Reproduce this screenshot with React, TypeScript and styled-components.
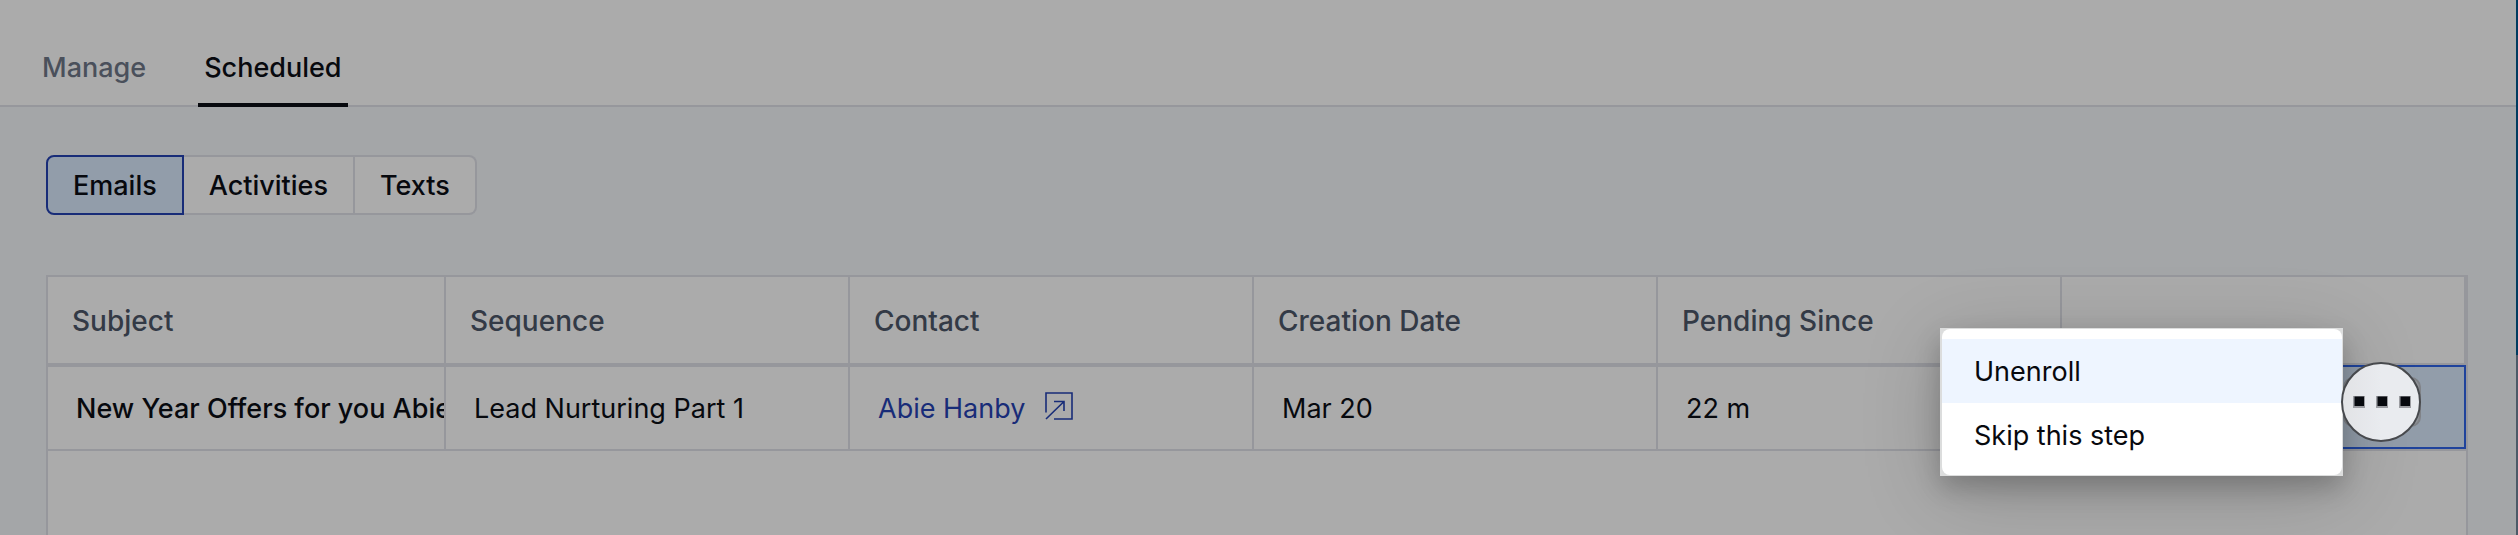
import React, { useState } from "react";
import styled, { createGlobalStyle, css } from "styled-components";

const color = {
  surface: "#ababab",
  canvas: "#a4a6a8",
  line: "#96979c",
  text: "#07090e",
  heading: "#333a46",
  muted: "#4a505b",
  blue: "#182c78",
  focus: "#1f439c",
  selected: "#929daa",
};

const GlobalStyle = createGlobalStyle`
  *, *::before, *::after { box-sizing: border-box; }
  body {
    margin: 0;
    background: ${color.canvas};
    color: ${color.text};
    font-family: Inter, "Liberation Sans", sans-serif;
    font-size: 27px;
    line-height: 36px;
  }
  button { font: inherit; color: inherit; margin: 0; cursor: pointer; }
`;

const Page = styled.div`
  display: flex;
  min-height: 100vh;
`;

const Main = styled.main`
  flex: 1;
  min-width: 0;
  display: flex;
  flex-direction: column;
`;

const Edge = styled.div`
  width: 2px;
  background: linear-gradient(#003b60 355px, #4c5a68 355px);
`;

const TabBar = styled.nav`
  display: flex;
  gap: 46px;
  padding: 30px 36px 0;
  background: ${color.surface};
  box-shadow: inset 0 -2px ${color.line};
`;

const Tab = styled.button<{ $active?: boolean }>`
  height: 77px;
  padding: 2px 6px 0;
  border: 0;
  border-bottom: 4px solid ${(p) => (p.$active ? color.text : "transparent")};
  background: none;
  font-weight: 500;
  color: ${(p) => (p.$active ? color.text : color.muted)};
`;

const Content = styled.section`
  flex: 1;
  display: flex;
  flex-direction: column;
  align-items: flex-start;
  gap: 60px;
  padding: 48px 48px 0 46px;
`;

const Segments = styled.div`
  display: flex;
  height: 60px;
`;

const Segment = styled.button<{ $active?: boolean }>`
  padding: 2px 25px 0;
  border: 2px solid ${color.line};
  border-left-width: 0;
  background: ${color.surface};
  font-weight: 500;
  &:first-child {
    border-left-width: 2px;
    border-radius: 8px 0 0 8px;
  }
  &:last-child { border-radius: 0 8px 8px 0; }
  ${(p) =>
    p.$active &&
    css`
      border-color: ${color.blue};
      background: ${color.selected};
    `}
`;

const Panel = styled.div`
  flex: 1;
  width: 100%;
  border: 2px solid ${color.line};
  border-bottom: 0;
  background: ${color.surface};
`;

const Table = styled.table`
  width: 100%;
  table-layout: fixed;
  border-collapse: separate;
  border-spacing: 0;
`;

const FirstCol = styled.col`
  width: 398px;
`;

const HeadCell = styled.th`
  height: 88px;
  padding: 2px 24px 0;
  border-right: 2px solid ${color.line};
  border-bottom: 2px solid ${color.line};
  text-align: left;
  font-size: 28px;
  font-weight: 500;
  color: ${color.heading};
`;

const Cell = styled.td<{ $strong?: boolean }>`
  height: 86px;
  padding: 2px 0 0 28px;
  border: solid ${color.line};
  border-width: 2px 2px 2px 0;
  overflow: hidden;
  white-space: nowrap;
  font-weight: ${(p) => (p.$strong ? 500 : 400)};
`;

const ActionCell = styled.td`
  height: 86px;
  padding: 12px 45px 0 0;
  border-bottom: 2px solid ${color.line};
  background: ${color.selected};
  box-shadow: inset 0 0 0 2px ${color.focus};
  vertical-align: top;
`;

const ActionAnchor = styled.div`
  position: relative;
  width: 78px;
  height: 50px;
  margin-left: auto;
  border: 2px solid #808388;
  border-radius: 10px;
  background: #909398;
`;

const MoreButton = styled.button`
  position: absolute;
  z-index: 2;
  top: -17px;
  left: -4px;
  width: 80px;
  height: 80px;
  padding: 0;
  border: 2px solid #47494d;
  border-radius: 50%;
  background: linear-gradient(90deg, #e2e3e6, #e9ebef 50%);
  svg { display: block; }
`;

const Menu = styled.div`
  position: absolute;
  z-index: 1;
  top: -51px;
  right: 76px;
  width: 403px;
  padding: 1px 1px 1px 2px;
  background: #dcdddd;
  box-shadow: 0 12px 24px rgba(0, 0, 0, 0.2), 0 16px 80px rgba(0, 0, 0, 0.18);
`;

const MenuList = styled.div`
  padding: 10px 0 8px;
  border-radius: 8px;
  background: #fff;
`;

const MenuItem = styled.button<{ $active?: boolean }>`
  display: block;
  width: 100%;
  height: 64px;
  padding: 2px 32px 0;
  border: 0;
  text-align: left;
  background: ${(p) => (p.$active ? "#eef5ff" : "#fff")};
`;

const ContactLink = styled.a`
  display: flex;
  align-items: center;
  gap: 20px;
  color: ${color.blue};
  text-decoration: none;
  svg { flex: none; margin-bottom: 6px; }
`;

const OpenIcon = () => (
  <svg width="28" height="28" viewBox="0 0 28 28" fill="none" stroke="currentColor" strokeWidth="1.6" aria-hidden="true">
    <path d="M1 20.5V1H27V27H9" />
    <path d="M1 27 19 9.5M9 9.5H19V19" />
  </svg>
);

const DotsIcon = () => (
  <svg width="76" height="76" viewBox="0 0 76 76" aria-hidden="true">
    {[10, 33, 56].map((x) => (
      <g key={x}>
        <rect x={x} y="32" width="12" height="12" fill="#9b9ca1" />
        <rect x={x + 1.5} y="32.5" width="9.5" height="9.5" fill="#07090e" />
      </g>
    ))}
  </svg>
);

const headings = ["Subject", "Sequence", "Contact", "Creation Date", "Pending Since", ""];

export default function App() {
  const [tab, setTab] = useState("Scheduled");
  const [kind, setKind] = useState("Emails");
  return (
    <>
      <GlobalStyle />
      <Page>
        <Main>
          <TabBar>
            {["Manage", "Scheduled"].map((t) => (
              <Tab key={t} $active={t === tab} onClick={() => setTab(t)}>
                {t}
              </Tab>
            ))}
          </TabBar>
          <Content>
            <Segments>
              {["Emails", "Activities", "Texts"].map((k) => (
                <Segment key={k} $active={k === kind} onClick={() => setKind(k)}>
                  {k}
                </Segment>
              ))}
            </Segments>
            <Panel>
              <Table>
                <colgroup>
                  <FirstCol />
                  <col span={5} />
                </colgroup>
                <thead>
                  <tr>
                    {headings.map((h) => (
                      <HeadCell key={h}>{h}</HeadCell>
                    ))}
                  </tr>
                </thead>
                <tbody>
                  <tr>
                    <Cell $strong>New Year Offers for you Abie</Cell>
                    <Cell>Lead Nurturing Part 1</Cell>
                    <Cell>
                      <ContactLink href="#contact">
                        Abie Hanby
                        <OpenIcon />
                      </ContactLink>
                    </Cell>
                    <Cell>Mar 20</Cell>
                    <Cell>22 m</Cell>
                    <ActionCell>
                      <ActionAnchor>
                        <MoreButton aria-label="More actions" aria-haspopup="menu">
                          <DotsIcon />
                        </MoreButton>
                        <Menu role="menu">
                          <MenuList>
                            <MenuItem role="menuitem" $active>
                              Unenroll
                            </MenuItem>
                            <MenuItem role="menuitem">Skip this step</MenuItem>
                          </MenuList>
                        </Menu>
                      </ActionAnchor>
                    </ActionCell>
                  </tr>
                </tbody>
              </Table>
            </Panel>
          </Content>
        </Main>
        <Edge />
      </Page>
    </>
  );
}
